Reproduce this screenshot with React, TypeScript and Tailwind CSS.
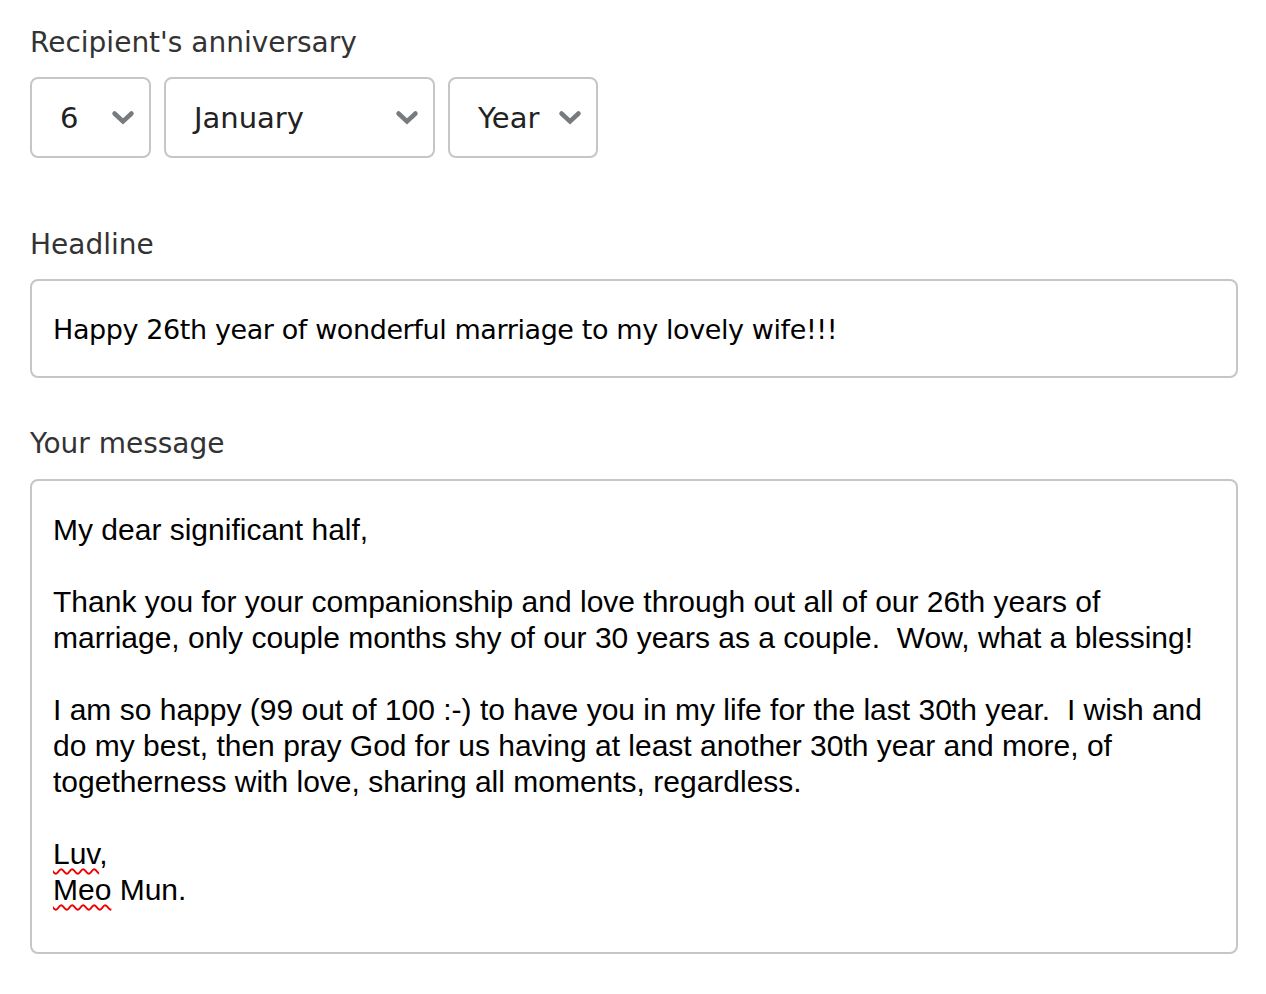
import React from 'react';

function Chevron() {
  return (
    <svg className="w-[24px] h-[16px] shrink-0" viewBox="0 0 24 16" fill="none">
      <path d="M3.5 3.5l8.5 8 8.5-8" stroke="#767b80" strokeWidth={4.5} strokeLinecap="round" strokeLinejoin="miter" />
    </svg>
  );
}

function FakeSelect({ value, width }: { value: string; width: string }) {
  return (
    <div
      className={`${width} h-[81px] flex items-center justify-between pl-[28px] pr-[14px] border-2 border-[#c6c6c6] rounded-[8px] bg-white text-[29px] text-[#222]`}
    >
      <span className="pt-[2px]">{value}</span>
      <Chevron />
    </div>
  );
}

export default function App() {
  const message = [
    'My dear significant half,',
    '',
    'Thank you for your companionship and love through out all of our 26th years of',
    'marriage, only couple months shy of our 30 years as a couple.  Wow, what a blessing!',
    '',
    'I am so happy (99 out of 100 :-) to have you in my life for the last 30th year.  I wish and',
    'do my best, then pray God for us having at least another 30th year and more, of',
    'togetherness with love, sharing all moments, regardless.',
    '',
  ];

  return (
    <div className="min-h-screen bg-white pt-[25px] pl-[30px] pr-[28px] font-['DejaVu_Sans',Verdana,sans-serif]">
      {/* Anniversary */}
      <label className="block text-[28px] leading-[36px] text-[#333] mb-[16px]">Recipient's anniversary</label>
      <div className="flex gap-[13px]">
        <FakeSelect value="6" width="w-[121px]" />
        <FakeSelect value="January" width="w-[271px]" />
        <FakeSelect value="Year" width="w-[150px]" />
      </div>

      {/* Headline */}
      <label className="block text-[28px] leading-[36px] text-[#333] mt-[69px] mb-[16px]">Headline</label>
      <div className="h-[99px] flex items-center px-[21px] pt-[4px] border-2 border-[#c6c6c6] rounded-[8px] text-[27px] tracking-[-0.4px] text-black">
        Happy 26th year of wonderful marriage to my lovely wife!!!
      </div>

      {/* Message */}
      <label className="block text-[28px] leading-[36px] text-[#333] mt-[48px] mb-[17px]">Your message</label>
      <div className="h-[475px] px-[21px] pt-[31px] border-2 border-[#c6c6c6] rounded-[8px] text-black font-['Liberation_Sans',Arial,sans-serif] text-[30px] leading-[36px] whitespace-pre">
        {message.map((line, i) => (
          <div key={i} className="h-[36px]">{line}</div>
        ))}
        <div className="h-[36px]">
          <span className="underline decoration-wavy decoration-[#e00] decoration-[1.5px] underline-offset-[4px]">Luv</span>,
        </div>
        <div className="h-[36px]">
          <span className="underline decoration-wavy decoration-[#e00] decoration-[1.5px] underline-offset-[4px]">Meo</span> Mun.
        </div>
      </div>
    </div>
  );
}
